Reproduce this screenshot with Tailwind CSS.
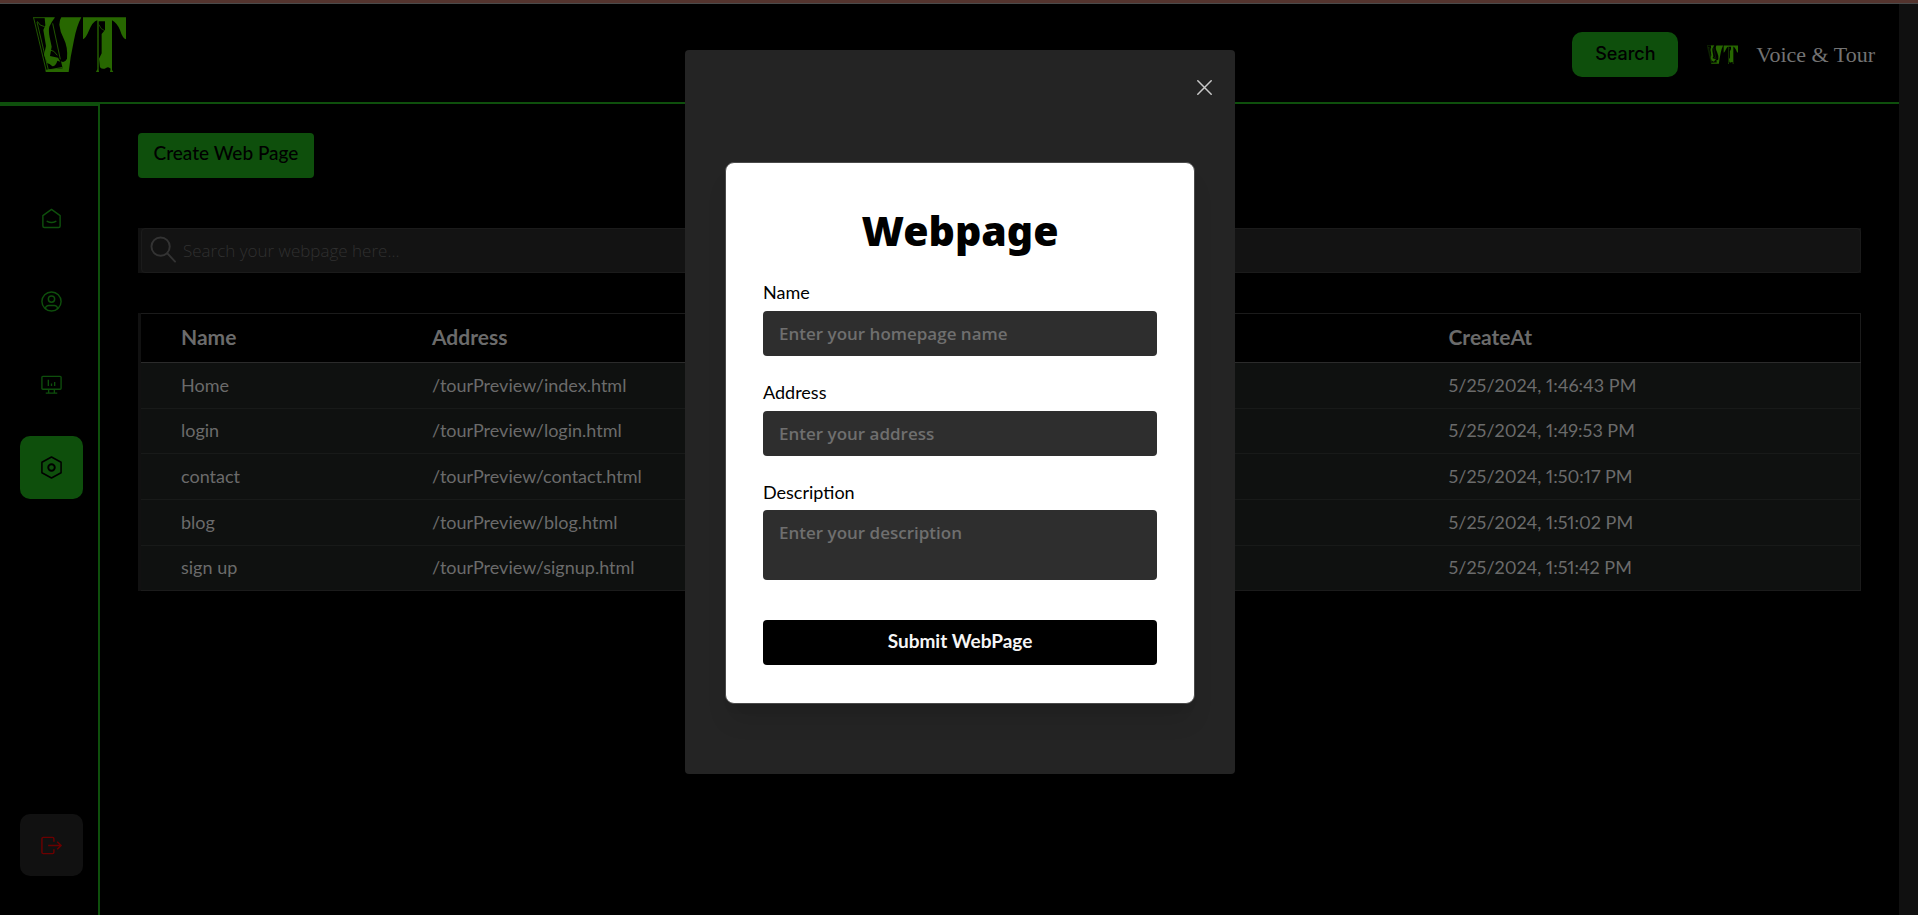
<!DOCTYPE html>
<html lang="en">
<head>
<meta charset="utf-8">
<meta name="viewport" content="width=device-width, initial-scale=1">
<title>Voice &amp; Tour</title>
<script src="https://cdn.jsdelivr.net/npm/@tailwindcss/browser@4"></script>
</head>
<body class="flex h-screen flex-col overflow-hidden bg-black font-['Lato',sans-serif] text-[#6b6b6b]">
<svg class="hidden" aria-hidden="true">
  <symbol id="logo" viewBox="15 21 279 165">
    <!-- left stroke of the V: thin outline with cracked fill -->
    <path fill="none" stroke="#276700" stroke-width="2.500" d="M15 23H80M17 24 55 184M27 36 61 180M28 34Q34 48 50 50M66 120Q78 120 88 136M74 40 97 148M61 180 104 172"/>
    <path fill="#276700" d="M50 23H80Q70 36 64 50Q61 62 65 82L71 110L66 138L90 143L97 155L88 152Q84 168 73 169Q64 160 58 160L48 134L54 108Q50 84 46 60L52 46Z"/>
    <!-- right stroke of the V and its base -->
    <path fill="#276700" d="M100 22H160Q146 48 138 90L128 142L122 186H53V179L104 175L99 154Q110 160 117 146Q120 112 108 88Q96 66 94 44Q94 30 100 22Z"/>
    <!-- T -->
    <path fill="#276700" d="M165 22H294V88Q284 86 276 60Q266 38 252 31V180L256 186H246L248 176Q241 168 234 174Q224 180 216 172L213 146L221 130V72L231 60V34H212V180L213 186H204L208 178V31Q194 34 182 64Q174 84 165 88Z"/>
    <path fill="none" stroke="#276700" stroke-width="2" d="M213 44Q217 58 230 62"/>
  </symbol>
</svg>

<div class="h-1 shrink-0 border-b border-[#4a4a4a] bg-[#54342e]"></div>
<div class="flex min-h-0 flex-1">
  <div class="flex min-w-0 flex-1 flex-col">
    <header class="flex h-[100px] shrink-0 items-start justify-between border-b-2 border-[#0e4f0c] pr-6">
      <a href="#" aria-label="VT home" class="mt-[13px] ml-[33px]"><svg class="h-[55px] w-[93px]"><use href="#logo"/></svg></a>
      <div class="mt-7 flex h-[45px] items-center">
        <button type="button" class="h-[45px] w-[106px] rounded-[10px] bg-[#0e4f0c] pb-[2px] font-['Inter',sans-serif] text-lg font-medium text-black">Search</button>
        <svg class="ml-[29px] h-[19px] w-[31px]" aria-hidden="true"><use href="#logo"/></svg>
        <span class="ml-[18px] font-['Liberation_Serif',serif] text-[22px] text-[#737373]">Voice &amp; Tour</span>
      </div>
    </header>
    <div class="flex min-h-0 flex-1">
      <nav aria-label="Main" class="flex w-[100px] shrink-0 flex-col justify-between border-t-2 border-r-2 border-[#0e4f0c] pt-[81px] pb-[39px] pl-5 text-[#0e4f0c]">
        <div class="flex flex-col gap-5">
          <a href="#" aria-label="Home" class="flex size-[63px] items-center justify-center rounded-[10px]">
            <svg class="size-[23px]" viewBox="0 0 24 24" fill="none" stroke="currentColor" stroke-width="1.500" stroke-linejoin="round" stroke-linecap="round"><path d="M3 9 12 2.500 21 9v10.700a1.600 1.600 0 0 1-1.600 1.600H4.600A1.600 1.600 0 0 1 3 19.700zM7.500 14.900q4.500 2.400 9 0"/></svg>
          </a>
          <a href="#" aria-label="Profile" class="flex size-[63px] items-center justify-center rounded-[10px]">
            <svg class="size-[23px]" viewBox="0 0 24 24" fill="none" stroke="currentColor" stroke-width="1.500"><circle cx="12" cy="12" r="10"/><circle cx="12" cy="9.500" r="3.300"/><path d="M6 20c-1-2.500 1.300-3.800 3.200-3.800h5.600c1.900 0 4.200 1.300 3.200 3.800"/></svg>
          </a>
          <a href="#" aria-label="Dashboard" class="flex size-[63px] items-center justify-center rounded-[10px]">
            <svg class="size-[23px]" viewBox="0 0 24 24" fill="none" stroke="currentColor" stroke-width="1.400"><rect x="2" y="3.500" width="20" height="13.500" rx="1"/><path d="M9 17v4M15 17v4M6 21h12M8.700 7v6.500M12 11v2.500M15.300 9.500v4"/></svg>
          </a>
          <a href="#" aria-label="Web pages" aria-current="page" class="flex size-[63px] items-center justify-center rounded-[10px] bg-[#0e4f0c] text-black">
            <svg class="size-[23px]" viewBox="0 0 24 24" fill="none" stroke="currentColor" stroke-width="1.600" stroke-linejoin="round"><path d="M12 1 22 6.500v11L12 23 2 17.500v-11z"/><circle cx="12" cy="12" r="3.400" stroke-width="2"/></svg>
          </a>
        </div>
        <button type="button" aria-label="Log out" class="flex h-[62px] w-[63px] items-center justify-center rounded-[10px] bg-[#111111] text-[#6b0000]">
          <svg class="size-[23px]" viewBox="0 0 24 24" fill="none" stroke="currentColor" stroke-width="1.500"><path d="M14.500 8V5A1.500 1.500 0 0 0 13 3.500H3.500A1.500 1.500 0 0 0 2 5v14a1.500 1.500 0 0 0 1.500 1.500H13a1.500 1.500 0 0 0 1.500-1.500v-3M8.500 12H22M18 8l4 4-4 4"/></svg>
        </button>
      </nav>
      <main class="min-w-0 flex-1 pt-[29px] pr-[38px] pl-[38px]">
        <button type="button" class="h-[45px] w-[176px] rounded bg-[#0e4f0c] pb-1 text-[19px] font-medium text-black">Create Web Page</button>
        <div class="mt-[50px] flex h-[45px] items-center border-l-[3px] border-[#111111] bg-[#131313]">
          <label class="flex h-full flex-1 items-center rounded border border-[#1b1b1b] pl-2 text-[#333333]">
            <svg class="mr-1.5 mb-0.5 size-[27px]" viewBox="0 0 28 28" fill="none" stroke="currentColor" stroke-width="2" stroke-linecap="round"><circle cx="11" cy="11" r="9.500"/><path d="M18 18 26 26.500"/></svg>
            <input type="text" aria-label="Search your webpage" placeholder="Search your webpage here..." class="h-full flex-1 bg-transparent font-['Open_Sans',sans-serif] text-[17px] font-light outline-none placeholder:text-[#303030]">
          </label>
        </div>
        <div class="mt-10 border-l-[3px] border-[#111111]">
          <table class="w-full table-fixed border border-l-0 border-[#1b1b1b] text-left text-lg">
            <colgroup><col class="w-[251px]"><col><col class="w-[452px]"></colgroup>
            <thead>
              <tr class="h-[49px] border-b border-[#2b2b2b] text-[21px] leading-6"><th class="pb-0.5 pl-10 font-bold">Name</th><th class="pb-0.5 pl-10 font-bold">Address</th><th class="pb-0.5 pl-10 font-bold">CreateAt</th></tr>
            </thead>
            <tbody class="bg-[#0f1110]">
              <tr class="h-[46px] border-b border-[#181a19]"><td class="pb-0.5 pl-10">Home</td><td class="pb-0.5 pl-10">/tourPreview/index.html</td><td class="pb-0.5 pl-10 proportional-nums">5/25/2024, 1:46:43 PM</td></tr>
              <tr class="h-[45px] border-b border-[#181a19]"><td class="pb-0.5 pl-10">login</td><td class="pb-0.5 pl-10">/tourPreview/login.html</td><td class="pb-0.5 pl-10 proportional-nums">5/25/2024, 1:49:53 PM</td></tr>
              <tr class="h-[46px] border-b border-[#181a19]"><td class="pb-0.5 pl-10">contact</td><td class="pb-0.5 pl-10">/tourPreview/contact.html</td><td class="pb-0.5 pl-10 proportional-nums">5/25/2024, 1:50:17 PM</td></tr>
              <tr class="h-[46px] border-b border-[#181a19]"><td class="pb-0.5 pl-10">blog</td><td class="pb-0.5 pl-10">/tourPreview/blog.html</td><td class="pb-0.5 pl-10 proportional-nums">5/25/2024, 1:51:02 PM</td></tr>
              <tr class="h-[45px]"><td class="pb-0.5 pl-10">sign up</td><td class="pb-0.5 pl-10">/tourPreview/signup.html</td><td class="pb-0.5 pl-10 proportional-nums">5/25/2024, 1:51:42 PM</td></tr>
            </tbody>
          </table>
        </div>
      </main>
    </div>
  </div>
  <div class="w-[19px] shrink-0 bg-[#101010]"></div>
</div>

<div class="fixed inset-0 flex items-start justify-center pt-[50px] pl-[2px]">
  <section role="dialog" aria-modal="true" aria-labelledby="dialog-title" class="w-[550px] rounded bg-[#242424] px-10 pb-[70px]">
    <div class="-mr-10 flex h-[112px] justify-end pt-[21px] pr-[15px]">
      <button type="button" aria-label="Close" class="flex size-8 items-center justify-center text-[#c9c9c9]">
        <svg class="size-[15px]" viewBox="0 0 15 15" fill="none" stroke="currentColor" stroke-width="1.500" stroke-linecap="round"><path d="M.8.8 14.200 14.200M14.200.8.8 14.200"/></svg>
      </button>
    </div>
    <form class="rounded-[9px] border border-[#4a4a4a] bg-white px-[37px] pt-[37px] pb-[38px] text-black shadow-xl shadow-black/10">
      <h1 id="dialog-title" class="mb-5 text-center font-['Noto_Sans',sans-serif] text-[41px] leading-[60px] font-black">Webpage</h1>
      <label for="name" class="block h-[31px] text-lg leading-6">Name</label>
      <input id="name" type="text" placeholder="Enter your homepage name" class="block h-[45px] w-full rounded bg-[#2e2e2e] px-4 font-['Open_Sans',sans-serif] text-[17px] font-semibold text-white placeholder:text-[#6f6f6f]">
      <label for="address" class="mt-6 block h-[31px] text-lg leading-6">Address</label>
      <input id="address" type="text" placeholder="Enter your address" class="block h-[45px] w-full rounded bg-[#2e2e2e] px-4 font-['Open_Sans',sans-serif] text-[17px] font-semibold text-white placeholder:text-[#6f6f6f]">
      <label for="description" class="mt-6 block h-[30px] text-lg leading-6">Description</label>
      <textarea id="description" placeholder="Enter your description" class="block h-[70px] w-full resize-none rounded bg-[#2e2e2e] px-4 py-[11px] font-['Open_Sans',sans-serif] text-[17px] leading-6 font-semibold text-white placeholder:text-[#6f6f6f]"></textarea>
      <button type="submit" class="mt-10 block h-[45px] w-full rounded bg-black pb-0.5 text-[19px] font-bold text-[#f5f5f5]">Submit WebPage</button>
    </form>
  </section>
</div>
</body>
</html>
